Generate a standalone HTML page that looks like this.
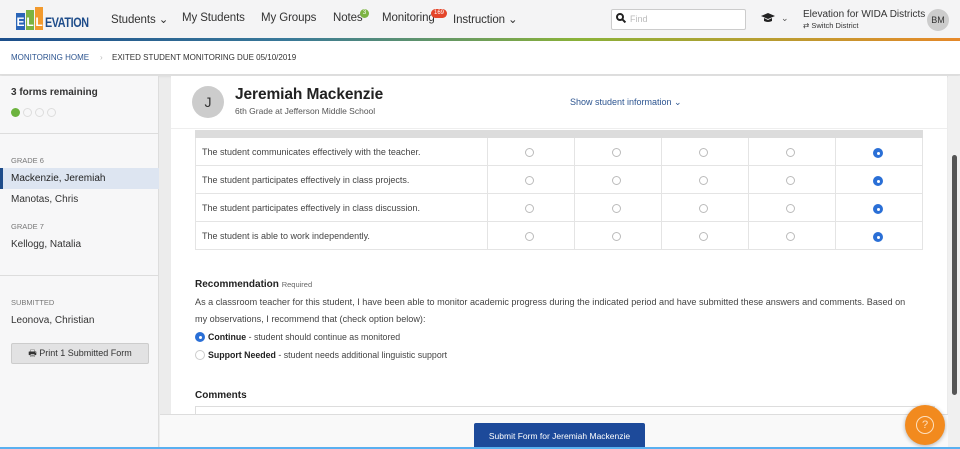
<!DOCTYPE html>
<html><head><style>
*{box-sizing:border-box;margin:0;padding:0}
body{width:960px;height:449px;overflow:hidden;font-family:"Liberation Sans",sans-serif;background:#ececec;position:relative;color:#333}
.abs{position:absolute}
.hdr{left:0;top:0;width:960px;height:38px;background:#f4f4f5}
.grad{left:0;top:38px;width:960px;height:3px;background:linear-gradient(90deg,#1d4f8c 0%,#3a7a9a 30%,#8bb33a 60%,#e88a2a 100%)}
.nav{top:12px;font-size:11.5px;color:#333;letter-spacing:-0.1px}
.bc{left:0;top:41px;width:960px;height:34px;background:#fff;border-bottom:1px solid #ddd;box-shadow:0 1px 3px rgba(0,0,0,.1)}
.side{left:0;top:76px;width:159px;height:373px;background:#f7f7f8;border-right:1px solid #ddd}
.card{left:171px;top:76px;width:776px;height:373px;background:#fff}
.radio{width:9px;height:9px;border:1px solid #bbb;border-radius:50%;position:absolute}
.sel{width:10px;height:10px;border-radius:50%;background:#2a6fd6;position:absolute}
.sel::after{content:"";position:absolute;left:3.5px;top:3.5px;width:3px;height:3px;border-radius:50%;background:#fff}
.row{left:195px;width:728px;height:28px;border:1px solid #e4e4e4;border-top:none;font-size:9px;color:#444;line-height:28px;padding-left:6px}
</style></head><body>
<div class="abs hdr"></div>
<div class="abs grad"></div>
<div class="abs" style="left:16px;top:13px;width:9px;height:17px;background:#2a65b8;color:#fff;font-size:12px;font-weight:bold;text-align:center;line-height:19px">E</div>
<div class="abs" style="left:26px;top:10px;width:8px;height:20px;background:#7cb342;color:#fff;font-size:12px;font-weight:bold;text-align:center;line-height:24px">L</div>
<div class="abs" style="left:35px;top:7px;width:8px;height:23px;background:#f29a2e;color:#fff;font-size:12px;font-weight:bold;text-align:center;line-height:30px">L</div>
<div class="abs" style="left:45px;top:14px;font-size:14px;font-weight:bold;color:#1e4c8a;letter-spacing:-0.5px;transform:scaleX(.77);transform-origin:left">EVATION</div>
<div class="abs nav" style="left:111px">Students ⌄</div>
<div class="abs nav" style="left:182px">My Students</div>
<div class="abs nav" style="left:261px">My Groups</div>
<div class="abs nav" style="left:333px">Notes</div>
<div class="abs" style="left:360px;top:9px;width:9px;height:9px;border-radius:50%;background:#7cb342;color:#fff;font-size:6px;text-align:center;line-height:9px">3</div>
<div class="abs nav" style="left:382px">Monitoring</div>
<div class="abs" style="left:431px;top:9px;width:16px;height:9px;border-radius:5px;background:#e4452a;color:#fff;font-size:6px;text-align:center;line-height:9px">169</div>
<div class="abs nav" style="left:453px">Instruction ⌄</div>
<div class="abs" style="left:611px;top:9px;width:135px;height:21px;background:#fff;border:1px solid #ccc;border-radius:2px;font-size:9px;color:#bbb;line-height:19px;padding-left:18px">Find</div>
<div class="abs" style="left:616px;top:13px;width:8px;height:8px;border:2px solid #222;border-radius:50%"></div>
<div class="abs" style="left:622px;top:20px;width:4px;height:2px;background:#222;transform:rotate(45deg)"></div>
<svg class="abs" style="left:760px;top:12px" width="16" height="12" viewBox="0 0 16 12"><path d="M8 1 L15 4 L8 7 L1 4Z" fill="#222"/><path d="M4 6 V9 Q8 11 12 9 V6 L8 8Z" fill="#222"/></svg>
<div class="abs" style="left:781px;top:13px;font-size:9px;color:#555">⌄</div>
<div class="abs" style="left:803px;top:9px;font-size:10px;color:#333">Elevation for WIDA Districts</div>
<div class="abs" style="left:803px;top:21px;font-size:7.5px;color:#333">⇄ Switch District</div>
<div class="abs" style="left:927px;top:9px;width:22px;height:22px;border-radius:50%;background:#ccc;font-size:9px;text-align:center;line-height:22px;color:#333">BM</div>

<div class="abs bc"></div>
<div class="abs" style="left:11px;top:53px;font-size:8px;color:#2d5590">MONITORING HOME</div>
<div class="abs" style="left:100px;top:53px;font-size:8px;color:#bbb">›</div>
<div class="abs" style="left:112px;top:53px;font-size:8px;color:#333">EXITED STUDENT MONITORING DUE 05/10/2019</div>

<div class="abs side"></div>
<div class="abs" style="left:11px;top:87px;font-size:10px;font-weight:bold;color:#333">3 forms remaining</div>
<div class="abs" style="left:11px;top:108px;width:9px;height:9px;border-radius:50%;background:#6cb33e"></div>
<div class="abs" style="left:23px;top:108px;width:9px;height:9px;border-radius:50%;border:1px solid #ddd"></div>
<div class="abs" style="left:35px;top:108px;width:9px;height:9px;border-radius:50%;border:1px solid #ddd"></div>
<div class="abs" style="left:47px;top:108px;width:9px;height:9px;border-radius:50%;border:1px solid #ddd"></div>
<div class="abs" style="left:0;top:133px;width:159px;height:1px;background:#ddd"></div>
<div class="abs" style="left:11px;top:156px;font-size:7.5px;color:#777">GRADE 6</div>
<div class="abs" style="left:0;top:168px;width:159px;height:21px;background:#dde5f1;border-left:3px solid #1e4c8a"></div>
<div class="abs" style="left:11px;top:173px;font-size:10px;color:#222">Mackenzie, Jeremiah</div>
<div class="abs" style="left:11px;top:194px;font-size:10px;color:#333">Manotas, Chris</div>
<div class="abs" style="left:11px;top:222px;font-size:7.5px;color:#777">GRADE 7</div>
<div class="abs" style="left:11px;top:239px;font-size:10px;color:#333">Kellogg, Natalia</div>
<div class="abs" style="left:0;top:275px;width:159px;height:1px;background:#ddd"></div>
<div class="abs" style="left:11px;top:298px;font-size:7.5px;color:#777">SUBMITTED</div>
<div class="abs" style="left:11px;top:315px;font-size:10px;color:#333">Leonova, Christian</div>
<div class="abs" style="left:11px;top:343px;width:138px;height:21px;background:#e2e2e3;border:1px solid #ccc;border-radius:2px;font-size:9px;color:#333;text-align:center;line-height:19px">🖶 Print 1 Submitted Form</div>

<div class="abs card"></div>
<div class="abs" style="left:171px;top:76px;width:776px;height:53px;border-bottom:1px solid #eee;background:#fff"></div>
<div class="abs" style="left:192px;top:86px;width:32px;height:32px;border-radius:50%;background:#ccc;font-size:14px;text-align:center;line-height:32px;color:#333">J</div>
<div class="abs" style="left:235px;top:86px;font-size:15.5px;font-weight:bold;color:#222;letter-spacing:-0.1px">Jeremiah Mackenzie</div>
<div class="abs" style="left:235px;top:106px;font-size:8.5px;color:#555">6th Grade at Jefferson Middle School</div>
<div class="abs" style="left:570px;top:97px;font-size:9px;color:#2d5590">Show student information ⌄</div>

<div class="abs" style="left:195px;top:130px;width:728px;height:8px;background:#dcdcdc"></div>
<div class="abs row" style="top:138px">The student communicates effectively with the teacher.</div>
<div class="abs row" style="top:166px">The student participates effectively in class projects.</div>
<div class="abs row" style="top:194px">The student participates effectively in class discussion.</div>
<div class="abs row" style="top:222px">The student is able to work independently.</div>
<div id="g"></div>
<script>
var h='';var xs=[487,574,661,748,835];
for(var r=0;r<4;r++){var y=138+r*28;
for(var c=0;c<5;c++){h+='<div class="abs" style="left:'+xs[c]+'px;top:'+y+'px;width:1px;height:28px;background:#e4e4e4"></div>';
var cx=xs[c]+43;
if(c==4)h+='<div class="sel" style="left:'+(cx-5)+'px;top:'+(y+10)+'px"></div>';
else h+='<div class="radio" style="left:'+(cx-5)+'px;top:'+(y+10)+'px"></div>';}}
document.getElementById('g').innerHTML=h;
</script>

<div class="abs" style="left:195px;top:279px;font-size:10px;font-weight:bold;color:#222">Recommendation <span style="font-weight:normal;font-size:7.5px;color:#666">Required</span></div>
<div class="abs" style="left:195px;top:294px;font-size:9.1px;color:#444;line-height:17px;width:730px;white-space:nowrap">As a classroom teacher for this student, I have been able to monitor academic progress during the indicated period and have submitted these answers and comments. Based on<br>my observations, I recommend that (check option below):</div>
<div class="sel" style="left:195px;top:332px"></div>
<div class="abs" style="left:208px;top:332px;font-size:8.8px;color:#444"><b style="color:#222">Continue</b> - student should continue as monitored</div>
<div class="radio" style="left:195px;top:350px;width:10px;height:10px;border-color:#ccc"></div>
<div class="abs" style="left:208px;top:350px;font-size:8.8px;color:#444"><b style="color:#222">Support Needed</b> - student needs additional linguistic support</div>
<div class="abs" style="left:195px;top:390px;font-size:10px;font-weight:bold;color:#222">Comments</div>
<div class="abs" style="left:195px;top:406px;width:740px;height:10px;border:1px solid #ddd"></div>

<div class="abs" style="left:160px;top:414px;width:788px;height:35px;background:#f9f9f9;border-top:1px solid #ddd"></div>
<div class="abs" style="left:474px;top:423px;width:171px;height:26px;background:#1d4a9a;border-radius:2px;color:#fff;font-size:8.5px;text-align:center;line-height:26px">Submit Form for Jeremiah Mackenzie</div>
<div class="abs" style="left:905px;top:405px;width:40px;height:40px;border-radius:50%;background:#f28a1e;box-shadow:0 1px 4px rgba(0,0,0,.3)"></div>
<div class="abs" style="left:916px;top:416px;width:18px;height:18px;border-radius:50%;border:1.5px solid #fde0bf;color:#fde0bf;font-size:11px;text-align:center;line-height:16px">?</div>
<div class="abs" style="left:948px;top:76px;width:12px;height:373px;background:#f0f0f0"></div>
<div class="abs" style="left:952px;top:155px;width:5px;height:240px;background:#555;border-radius:3px"></div>
<div class="abs" style="left:0;top:447px;width:960px;height:2px;background:#5ab0f0"></div>
</body></html>
